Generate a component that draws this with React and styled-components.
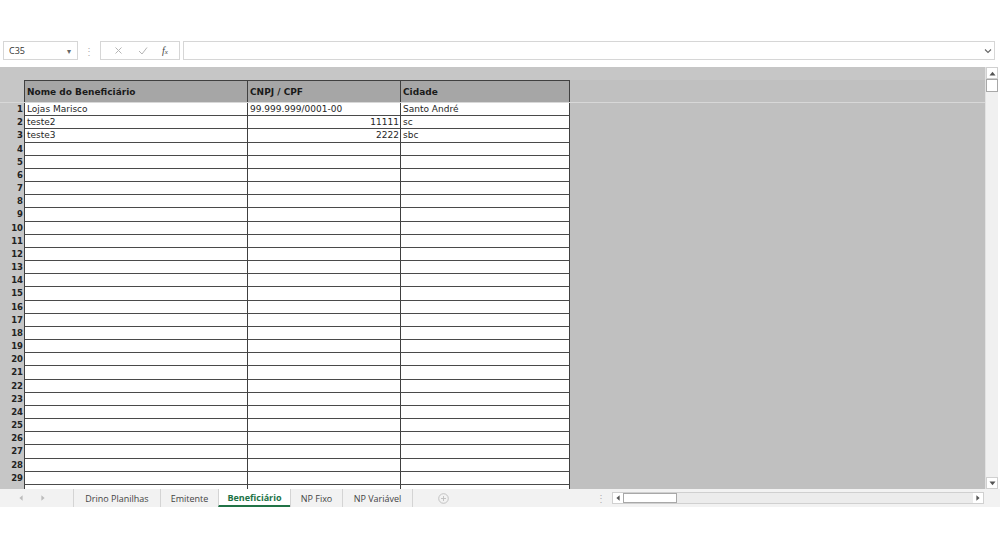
import React from "react"
import styled, { createGlobalStyle } from "styled-components"

const GlobalStyle = createGlobalStyle`
  html, body {
    margin: 0;
    padding: 0;
    background: #ffffff;
  }
  body {
    font-family: "Open Sans", "Liberation Sans", sans-serif;
  }
`

const columns = [
  { key: "nome", title: "Nome do Beneficiário", width: 223 },
  { key: "doc", title: "CNPJ / CPF", width: 153, align: "right" },
  { key: "cidade", title: "Cidade", width: 170 },
]

const data = [
  { nome: "Lojas Marisco", doc: "99.999.999/0001-00", docLeft: true, cidade: "Santo André" },
  { nome: "teste2", doc: "11111", cidade: "sc" },
  { nome: "teste3", doc: "2222", cidade: "sbc" },
]

const tabs = [
  { name: "Drino Planilhas", width: 87 },
  { name: "Emitente", width: 58 },
  { name: "Beneficiário", width: 72, active: true },
  { name: "NP Fixo", width: 52 },
  { name: "NP Variável", width: 70 },
]

function Arrow({ dir }) {
  return (
    <svg width="4" height="6" viewBox="0 0 4 6">
      <path
        d={dir === "left" ? "M3.6 0.3 L0.4 3 L3.6 5.7 Z" : "M0.4 0.3 L3.6 3 L0.4 5.7 Z"}
        fill="currentColor"
      />
    </svg>
  )
}

function App() {
  const rows = []
  for (let i = 1; i <= 30; i++) rows.push(data[i - 1] || {})

  return (
    <Page>
      <GlobalStyle />
      <FormulaBar>
        <NameBox>
          <span>C35</span>
          <Caret>▾</Caret>
        </NameBox>
        <Grip>⋮</Grip>
        <FxBox>
          <FxIcon>
            <svg width="9" height="9" viewBox="0 0 9 9">
              <path d="M1.5 1.5 L7.5 7.5 M7.5 1.5 L1.5 7.5" stroke="#b5b5b5" strokeWidth="1" />
            </svg>
          </FxIcon>
          <FxIcon>
            <svg width="10" height="9" viewBox="0 0 10 9">
              <path d="M1 5 L4 8 L9 1.5" stroke="#b5b5b5" strokeWidth="1" fill="none" />
            </svg>
          </FxIcon>
          <FxText>
            <i>f</i>
            <small>x</small>
          </FxText>
        </FxBox>
        <FormulaInput>
          <svg width="8" height="6" viewBox="0 0 8 6">
            <path d="M1 1.5 L4 4.5 L7 1.5" stroke="#666" strokeWidth="1.1" fill="none" />
          </svg>
        </FormulaInput>
      </FormulaBar>

      <SheetArea>
        <GridArea>
          <TopBand />
          <HeaderRow>
            <RowHead />
            {columns.map((c) => (
              <HeaderCell key={c.key} $w={c.width}>
                {c.title}
              </HeaderCell>
            ))}
          </HeaderRow>
          {rows.map((r, i) => (
            <DataRow key={i}>
              <RowHead>{i < 29 ? i + 1 : ""}</RowHead>
              {columns.map((c) => (
                <Cell
                  key={c.key}
                  $w={c.width}
                  $align={c.align === "right" && !r.docLeft ? "right" : "left"}
                >
                  {r[c.key] || ""}
                </Cell>
              ))}
            </DataRow>
          ))}
        </GridArea>
        <VScroll>
          <ScrollBtn>
            <svg width="7" height="5" viewBox="0 0 7 5">
              <path d="M0.5 4.5 L3.5 0.8 L6.5 4.5 Z" fill="#555" />
            </svg>
          </ScrollBtn>
          <VThumb />
          <VTrack />
          <ScrollBtn>
            <svg width="7" height="5" viewBox="0 0 7 5">
              <path d="M0.5 0.5 L3.5 4.2 L6.5 0.5 Z" fill="#555" />
            </svg>
          </ScrollBtn>
        </VScroll>
        <RightGap />
      </SheetArea>

      <TabBar>
        <NavArrows>
          <Arrow dir="left" />
          <Arrow dir="right" />
        </NavArrows>
        {tabs.map((t) => (
          <Tab key={t.name} $w={t.width} $active={t.active}>
            {t.name}
          </Tab>
        ))}
        <TabEnd />
        <AddTab>
          <svg width="11" height="11" viewBox="0 0 11 11">
            <circle cx="5.5" cy="5.5" r="4.8" stroke="#bdbdbd" fill="none" strokeWidth="0.9" />
            <path d="M5.5 3 V8 M3 5.5 H8" stroke="#bdbdbd" strokeWidth="0.9" />
          </svg>
        </AddTab>
        <Spacer />
        <Grip>⋮</Grip>
        <HScroll>
          <HBtn>
            <Arrow dir="left" />
          </HBtn>
          <HThumb />
          <HTrack />
          <HBtn>
            <Arrow dir="right" />
          </HBtn>
        </HScroll>
        <TabGap />
      </TabBar>
    </Page>
  )
}

export default App

const Page = styled.div`
  width: 1000px;
  height: 547px;
  display: flex;
  flex-direction: column;
  padding-top: 41px;
  box-sizing: border-box;
  background: #fff;
  overflow: hidden;
`

const FormulaBar = styled.div`
  height: 19px;
  display: flex;
  align-items: stretch;
  padding-left: 3px;
  margin-bottom: 7px;
`

const NameBox = styled.div`
  width: 75px;
  box-sizing: border-box;
  border: 1px solid #d6d6d6;
  display: flex;
  align-items: center;
  justify-content: space-between;
  padding: 0 6px 0 5px;
  font-size: 9px;
  color: #333;
`

const Caret = styled.span`
  font-size: 8px;
  color: #666;
`

const Grip = styled.div`
  width: 22px;
  display: flex;
  align-items: center;
  justify-content: center;
  color: #b0b0b0;
  font-size: 10px;
`

const FxBox = styled.div`
  width: 80px;
  box-sizing: border-box;
  border: 1px solid #d6d6d6;
  display: flex;
  align-items: center;
  justify-content: space-around;
  padding: 0 4px 0 6px;
`

const FxIcon = styled.span`
  display: flex;
  align-items: center;
`

const FxText = styled.span`
  font-family: "Liberation Serif", serif;
  font-size: 10px;
  color: #444;
  small {
    font-size: 7px;
    font-style: italic;
  }
`

const FormulaInput = styled.div`
  width: 812px;
  margin-left: 3px;
  box-sizing: border-box;
  border: 1px solid #d6d6d6;
  display: flex;
  align-items: center;
  justify-content: flex-end;
  padding-right: 2px;
`

const SheetArea = styled.div`
  height: 422px;
  display: flex;
`

const GridArea = styled.div`
  flex: 1;
  background: #c0c0c0;
  overflow: hidden;
  font-family: "DejaVu Sans", "Liberation Sans", sans-serif;
`

const TopBand = styled.div`
  height: 13px;
  background: #c6c6c6;
`

const HeaderRow = styled.div`
  display: flex;
  height: 23px;
  box-sizing: border-box;
  border-bottom: 1px solid #d8d8d8;
`

const RowHead = styled.div`
  width: 24px;
  flex-shrink: 0;
  box-sizing: border-box;
  text-align: right;
  padding-right: 1px;
  font-size: 8.5px;
  font-weight: bold;
  color: #222;
  background: #c6c6c6;
  line-height: 12px;
`

const HeaderCell = styled.div`
  width: ${(p) => p.$w}px;
  box-sizing: border-box;
  background: #a6a6a6;
  border-top: 1px solid #404040;
  border-left: 1px solid #404040;
  &:last-child {
    border-right: 1px solid #404040;
  }
  font-size: 9px;
  font-weight: bold;
  color: #1a1a1a;
  padding: 6px 0 0 2px;
`

const DataRow = styled.div`
  display: flex;
  height: 13.18px;
`

const Cell = styled.div`
  width: ${(p) => p.$w}px;
  box-sizing: border-box;
  background: #fff;
  border-left: 1px solid #404040;
  border-bottom: 1px solid #4a4a4a;
  &:last-child {
    border-right: 1px solid #404040;
  }
  font-size: 9px;
  color: #262626;
  text-align: ${(p) => p.$align};
  padding: 0 1px 0 2px;
  line-height: 12px;
  white-space: nowrap;
  overflow: hidden;
`

const VScroll = styled.div`
  width: 13px;
  display: flex;
  flex-direction: column;
  background: #f0f0f0;
  border-left: 1px solid #e2e2e2;
  box-sizing: border-box;
`

const ScrollBtn = styled.div`
  height: 12px;
  display: flex;
  align-items: center;
  justify-content: center;
  background: #fff;
  border: 1px solid #d0d0d0;
  box-sizing: border-box;
`

const VThumb = styled.div`
  height: 13px;
  background: #fff;
  border: 1px solid #a8a8a8;
  box-sizing: border-box;
`

const VTrack = styled.div`
  flex: 1;
`

const RightGap = styled.div`
  width: 2px;
  background: #fff;
`

const TabBar = styled.div`
  height: 18px;
  display: flex;
  align-items: stretch;
  background: #f2f2f2;
  font-size: 9px;
  color: #444;
`

const NavArrows = styled.div`
  width: 73px;
  display: flex;
  align-items: center;
  gap: 18px;
  padding-left: 19px;
  box-sizing: border-box;
  color: #bcbcbc;
`

const Tab = styled.div`
  width: ${(p) => p.$w}px;
  display: flex;
  align-items: center;
  justify-content: center;
  border-left: 1px solid #d4d4d4;
  box-sizing: border-box;
  white-space: nowrap;
  background: ${(p) => (p.$active ? "#fff" : "transparent")};
  color: ${(p) => (p.$active ? "#217346" : "#444")};
  font-weight: ${(p) => (p.$active ? "bold" : "normal")};
  border-bottom: ${(p) => (p.$active ? "2px solid #217346" : "none")};
`

const TabEnd = styled.div`
  border-left: 1px solid #d4d4d4;
  width: 25px;
`

const AddTab = styled.div`
  display: flex;
  align-items: center;
`

const Spacer = styled.div`
  flex: 1;
`

const HScroll = styled.div`
  width: 372px;
  margin: 3px 0;
  display: flex;
  border: 1px solid #d0d0d0;
  box-sizing: border-box;
  background: #ececec;
  color: #555;
`

const HBtn = styled.div`
  width: 10px;
  display: flex;
  align-items: center;
  justify-content: center;
  background: #fff;
`

const HThumb = styled.div`
  width: 54px;
  background: #fff;
  border: 1px solid #a8a8a8;
  box-sizing: border-box;
`

const HTrack = styled.div`
  flex: 1;
`

const TabGap = styled.div`
  width: 16px;
`
